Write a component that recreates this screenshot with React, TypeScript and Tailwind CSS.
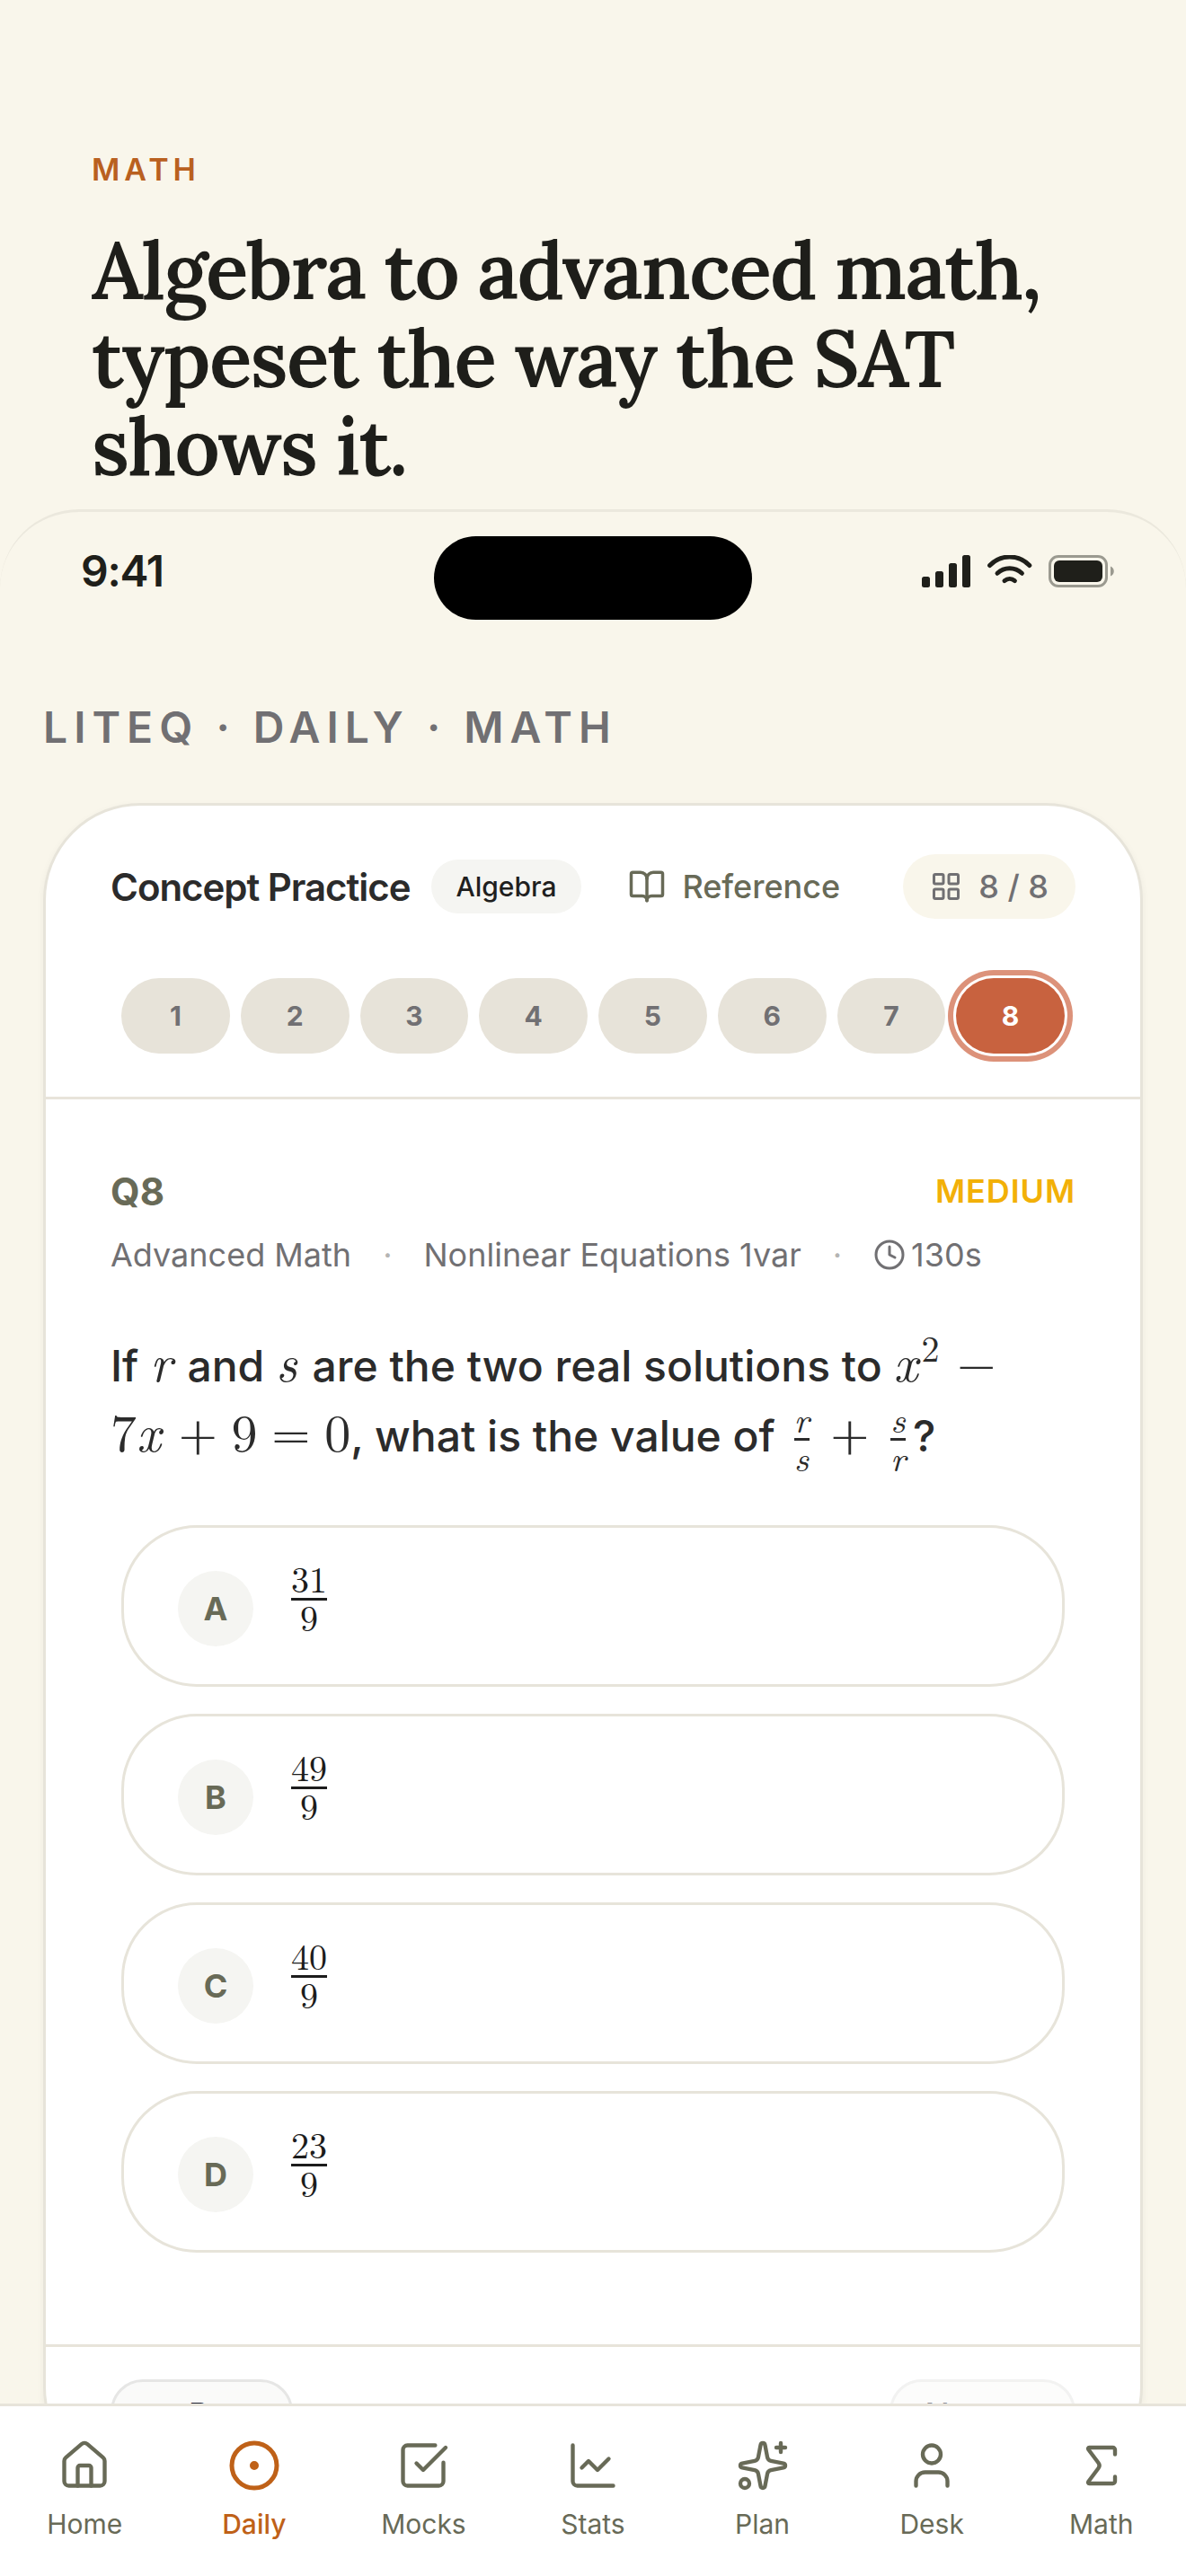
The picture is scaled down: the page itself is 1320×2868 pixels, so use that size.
import React, { useState } from 'react';
import {
  BookOpen,
  ChartLine,
  ChevronLeft,
  ChevronRight,
  CircleDot,
  Clock,
  House,
  LayoutGrid,
  Sigma,
  Sparkles,
  SquareCheckBig,
  User,
} from 'lucide-react';

const choices = [
  { letter: 'A', top: '31', bottom: '9' },
  { letter: 'B', top: '49', bottom: '9' },
  { letter: 'C', top: '40', bottom: '9' },
  { letter: 'D', top: '23', bottom: '9' },
];

const tabs = [
  { label: 'Home', icon: House },
  { label: 'Daily', icon: CircleDot },
  { label: 'Mocks', icon: SquareCheckBig },
  { label: 'Stats', icon: ChartLine },
  { label: 'Plan', icon: Sparkles },
  { label: 'Desk', icon: User },
  { label: 'Math', icon: Sigma },
];

/* Math helpers */
const Num: React.FC<{ children: React.ReactNode }> = ({ children }) => (
  <span className="font-['Latin_Modern_Roman','CMU_Serif','Liberation_Serif',serif] text-[58px] font-normal leading-[0]">
    {children}
  </span>
);

const Var: React.FC<{ children: React.ReactNode }> = ({ children }) => (
  <span className="mr-1 font-['Latin_Modern_Roman','CMU_Serif','Liberation_Serif',serif] text-[58px] font-normal italic leading-[0]">
    {children}
  </span>
);

const Op: React.FC<{ children: React.ReactNode }> = ({ children }) => (
  <span className="mx-[13px] align-[-3px] font-['DejaVu_Sans',sans-serif] text-[58px] font-extralight leading-[0]">
    {children}
  </span>
);

const Fraction: React.FC<{ top: string; bottom: string; italic?: boolean }> = ({ top, bottom, italic }) => (
  <span
    className={`-my-2 inline-flex flex-col items-stretch text-center align-middle font-['Latin_Modern_Roman','CMU_Serif','Liberation_Serif',serif] text-[40px] font-normal ${
      italic ? 'mx-2 italic' : ''
    }`}
  >
    <span className="border-b-[3px] border-current pb-[6px] leading-8">{top}</span>
    <span className="pb-[2px] leading-9">{bottom}</span>
  </span>
);

const StatusIcons = () => (
  <div className="flex items-center">
    <svg width="54" height="36" viewBox="0 0 54 36" fill="#1f1f1a">
      <rect x="0" y="24" width="9" height="12" rx="2.5" />
      <rect x="15" y="18" width="9" height="18" rx="2.5" />
      <rect x="30" y="9" width="9" height="27" rx="2.5" />
      <rect x="45" y="0" width="9" height="36" rx="2.5" />
    </svg>
    <svg
      className="ml-[19px]"
      width="50"
      height="36"
      viewBox="0 0 50 36"
      fill="none"
      stroke="#1f1f1a"
      strokeWidth="5"
      strokeLinecap="round"
    >
      <path d="M2.6 11.5A30.5 30.5 0 0 1 46.8 11.5" />
      <path d="M11 20.3A20 20 0 0 1 38.4 20.3" />
      <path d="M19 28.6A9 9 0 0 1 30.4 28.6" />
    </svg>
    <svg className="ml-[18px]" width="74" height="36" viewBox="0 0 74 36">
      <rect x="1.5" y="1.5" width="63" height="33" rx="9.5" fill="none" stroke="#9b9a90" strokeWidth="3" />
      <rect x="6" y="6" width="54" height="24" rx="6" fill="#1f1f1a" />
      <path d="M69 12.5C74 14.5 74 21.5 69 23.5Z" fill="#9b9a90" />
    </svg>
  </div>
);

const App: React.FC = () => {
  const [current, setCurrent] = useState(8);

  return (
    <div className="flex h-screen flex-col overflow-hidden bg-[#f9f6eb] font-['Inter',sans-serif]">
      <header className="shrink-0 px-[102px] pt-[168px]">
        <p className="text-[34px] font-semibold leading-[42px] tracking-[5px] text-[#b9601f]">MATH</p>
        <h1 className="mt-[42px] font-['Lora','Liberation_Serif',serif] text-[88px] font-semibold leading-[98px] tracking-[-0.02em] text-[#1e1e1a]">
          Algebra to advanced math, typeset the way the SAT shows it.
        </h1>
      </header>

      {/* Phone screen */}
      <div className="relative mt-[21px] flex min-h-0 flex-1 flex-col overflow-hidden rounded-t-[88px] border-t-[3px] border-[#ebe8dd] bg-[#f9f6eb]">
        <div className="flex h-[132px] shrink-0 items-center justify-between pl-[90px] pr-[79px]">
          <span className="text-[48px] font-semibold tracking-tight text-[#1f1f1a]">9:41</span>
          <StatusIcons />
        </div>
        <div className="absolute left-1/2 top-[27px] h-[93px] w-[354px] -translate-x-1/2 rounded-full bg-black" />

        <main className="min-h-0 flex-1 overflow-y-auto px-12 pt-[78px] [scrollbar-width:none]">
          <p className="text-[48px] font-semibold leading-[60px] tracking-[7px] text-[#717073]">LITEQ · DAILY · MATH</p>

          <section className="mt-[54px] rounded-[108px] border-[3px] border-[#e7e4da] bg-white shadow-[0_3px_9px_rgba(0,0,0,0.05)]">
            {/* Card header */}
            <div className="border-b-[3px] border-[#e8e4da] px-[72px] pb-12 pt-[54px]">
              <div className="flex h-[72px] items-center">
                <h2 className="whitespace-nowrap text-[42px] font-semibold tracking-tight text-[#2b2b2b]">Concept Practice</h2>
                <span className="ml-6 flex h-[60px] items-center rounded-full bg-[#f5f5f2] px-[27px] text-[30px] font-medium text-[#1f1f1f]">
                  Algebra
                </span>
                <button className="ml-auto mr-[34px] flex items-center gap-[18px] px-9 text-[36px] font-medium text-[#686a57]">
                  <BookOpen size={42} />
                  Reference
                </button>
                <button className="flex h-[72px] items-center gap-[18px] whitespace-nowrap rounded-full bg-[#f9f6eb] px-[30px] text-[36px] font-medium text-[#717073]">
                  <LayoutGrid size={36} />8 / 8
                </button>
              </div>

              <div className="mt-[66px] grid grid-cols-8 gap-3 px-3">
                {[1, 2, 3, 4, 5, 6, 7, 8].map((n) => (
                  <button
                    key={n}
                    onClick={() => setCurrent(n)}
                    className={`h-[84px] rounded-[42px] text-[30px] font-bold ${
                      n === current
                        ? 'bg-[#c8623f] text-white ring-[6px] ring-[#dc927a] ring-offset-[3px] ring-offset-white'
                        : 'bg-[#e7e3d9] text-[#717073]'
                    }`}
                  >
                    {n}
                  </button>
                ))}
              </div>
            </div>

            {/* Question */}
            <div className="px-[72px] pb-[102px] pt-[72px]">
              <div className="flex h-[60px] items-center justify-between">
                <span className="text-[42px] font-bold text-[#686a57]">Q8</span>
                <span className="text-[36px] font-semibold tracking-wide text-[#f2b008]">MEDIUM</span>
              </div>
              <div className="mt-[14px] flex h-[54px] items-center gap-[35px] text-[36px] text-[#717073]">
                <span>Advanced Math</span>
                <span className="text-[#b5b5b3]">·</span>
                <span>Nonlinear Equations 1var</span>
                <span className="text-[#b5b5b3]">·</span>
                <span className="flex items-center gap-[6px]">
                  <Clock size={36} />
                  130s
                </span>
              </div>

              <p className="mt-[58px] text-[48px] font-medium leading-[78px] text-[#2b2b2b]">
                If <Var>r</Var> and <Var>s</Var> are the two real solutions to <Var>x</Var>
                <span className="mr-1 align-[22px] font-['Latin_Modern_Roman','CMU_Serif','Liberation_Serif',serif] text-[40px] font-normal leading-[0]">
                  2
                </span>
                <Op>−</Op>
                <br />
                <Num>7</Num>
                <Var>x</Var>
                <Op>+</Op>
                <Num>9</Num>
                <Op>=</Op>
                <Num>0</Num>, what is the value of <Fraction top="r" bottom="s" italic />
                <Op>+</Op>
                <Fraction top="s" bottom="r" italic />?
              </p>

              <div className="mt-[60px] flex flex-col gap-[30px] px-3">
                {choices.map((choice) => (
                  <button
                    key={choice.letter}
                    className="flex items-start gap-[42px] rounded-[84px] border-[3px] border-[#e7e4da] pb-[42px] pl-[60px] pt-10 text-[#1c1c1c]"
                  >
                    <span className="mt-2 flex size-[84px] items-center justify-center rounded-full bg-[#f5f5f2] text-[36px] font-bold text-[#686a57]">
                      {choice.letter}
                    </span>
                    <span className="py-2">
                      <Fraction top={choice.top} bottom={choice.bottom} />
                    </span>
                  </button>
                ))}
              </div>
            </div>

            {/* Card footer */}
            <div className="flex items-center justify-between border-t-[3px] border-[#e8e4da] px-[72px] py-9">
              <button className="flex h-[78px] items-center gap-3 rounded-[36px] border-[3px] border-[#e6e6e5] bg-[#fafaf9] px-9 text-[36px] font-medium text-[#1f2233]">
                <ChevronLeft size={36} />
                Prev
              </button>
              <button
                disabled
                className="flex h-[78px] items-center gap-3 rounded-[36px] border-[3px] border-[#e6e6e5] bg-[#fafaf9] px-9 text-[36px] font-medium text-[#1f2233] opacity-50"
              >
                Next
                <ChevronRight size={36} />
              </button>
            </div>
          </section>
        </main>

        {/* Tab bar */}
        <nav className="grid shrink-0 grid-cols-7 border-t-[3px] border-[#e7e4da] bg-white pb-10 pt-9">
          {tabs.map(({ label, icon: Icon }) => (
            <a
              key={label}
              href={`#${label.toLowerCase()}`}
              className={`flex flex-col items-center gap-[17px] text-[30px] leading-9 ${
                label === 'Daily' ? 'font-medium text-[#bf6118]' : 'text-[#686a57]'
              }`}
            >
              <Icon size={60} strokeWidth={label === 'Daily' ? 2 : 1.75} />
              {label}
            </a>
          ))}
        </nav>
      </div>
    </div>
  );
};

export default App;
